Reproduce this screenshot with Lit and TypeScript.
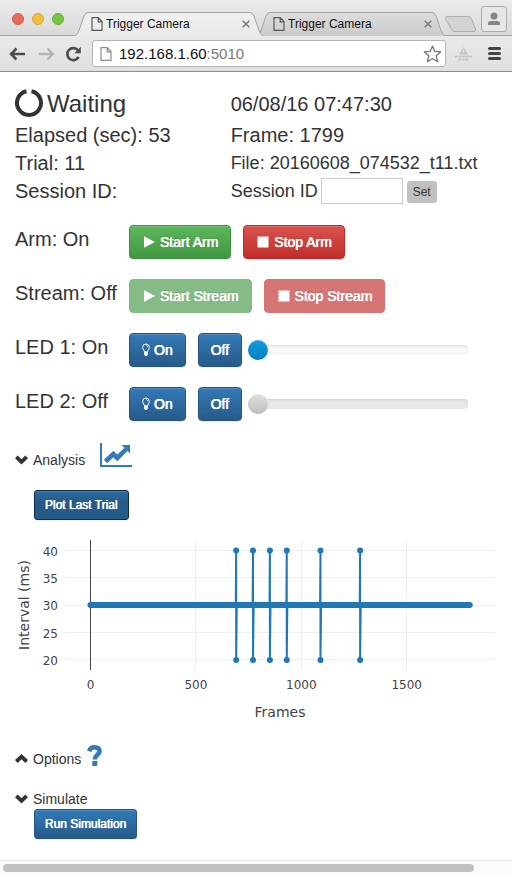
import { LitElement, html, svg, css } from "lit";
import { customElement, property, state } from "lit/decorators.js";
import { classMap } from "lit/directives/class-map.js";

const pageIcon = html`<svg class="page" width="12" height="14" viewBox="0 0 12 14" aria-hidden="true">
  <path d="M1 .7h6.3L11 4.6v8.7H1z M7.2 .8v4h3.8" fill="none" stroke="currentColor" stroke-width="1.2" />
</svg>`;

const playIcon = html`<svg width="14" height="14" viewBox="0 0 14 14" aria-hidden="true">
  <path d="M2 1.200 13 7 2 12.800z" fill="currentColor" />
</svg>`;

const stopIcon = html`<svg width="14" height="14" viewBox="0 0 14 14" aria-hidden="true">
  <rect x="1.5" y="1.5" width="11" height="11" fill="currentColor" />
</svg>`;

const bulbIcon = html`<svg width="8" height="14" viewBox="0 0 8 14" aria-hidden="true">
  <path d="M2.5 9.2C2.5 7.3.7 6.6.7 4.3A3.3 3.3 0 0 1 7.3 4.3C7.3 6.6 5.5 7.3 5.5 9.2z" fill="none" stroke="currentColor" />
  <path d="M4.3 2.5c1 .1 1.5.7 1.5 1.7" fill="none" stroke="currentColor" stroke-width=".8" />
  <path d="M2.2 8.600h3.6v3L4.9 13H3.1l-.9-1.400z" fill="currentColor" />
</svg>`;

const chevron = (up: boolean) => html`<svg class="chev" width="14" height="10" viewBox="0 0 14 10" aria-hidden="true">
  <path d=${up ? "M1.300 7.500 6.500 2.600 11.700 7.500" : "M1.300 1.900 6.500 6.800 11.700 1.900"} fill="none" stroke="currentColor" stroke-width="3.800" />
</svg>`;

@customElement("browser-tab")
export class BrowserTab extends LitElement {
  @property() label = "";
  @property({ type: Boolean }) active = false;

  static styles = css`
    :host { display: block; position: relative; flex: 0 1 190px; height: 24px; margin-left: -8px; }
    .shape { position: absolute; inset: 0; width: 100%; height: 100%; }
    .row { position: relative; display: flex; align-items: center; height: 24px; padding: 0 13px 0 17px; }
    .page { color: #5a5a5a; flex: none; }
    button { border: 0; padding: 0; background: none; font: 12px "Liberation Sans", Arial, sans-serif; color: #111; }
    .name { flex: 1; min-width: 0; margin-left: 3px; text-align: left; line-height: 16px; white-space: nowrap; overflow: hidden; }
    .close { flex: none; display: flex; color: #777; }
  `;

  render() {
    return html`
      <svg class="shape" viewBox="0 0 190 24" preserveAspectRatio="none" aria-hidden="true">
        <defs>
          <linearGradient id="g" x1="0" y1="0" x2="0" y2="1">
            <stop offset="0" stop-color=${this.active ? "#f1f1f1" : "#dcdcdc"} />
            <stop offset="1" stop-color=${this.active ? "#e9e9e9" : "#cbcbcb"} />
          </linearGradient>
        </defs>
        <path d="M0 24C3 23.500 4 21 5 18.500L10 4Q11.500.5 14 .5H176Q178.500.5 180 4L185 18.500C186 21 187 23.500 190 24" fill="url(#g)" stroke="#a3a3a3" />
      </svg>
      <div class="row">
        ${pageIcon}
        <button class="name">${this.label}</button>
        <button class="close" aria-label="Close tab">
          <svg width="10" height="10" viewBox="0 0 10 10"><path d="M1.700 1.700 8.300 8.300M8.300 1.700 1.700 8.300" stroke="currentColor" stroke-width="1.500" /></svg>
        </button>
      </div>`;
  }
}

@customElement("interval-plot")
export class IntervalPlot extends LitElement {
  private spikes = [691, 771, 851, 931, 1091, 1279];
  private last = 1799;

  static styles = css`
    :host { display: block; }
    .plot { display: block; width: 100%; height: auto; font-family: "DejaVu Sans", Verdana, sans-serif; fill: #444; }
    .tick { font-size: 12px; }
    .title { font-size: 14px; }
    .grid { stroke: #eee; fill: none; }
    .zero { stroke: #444; }
    .series { stroke: #1f77b4; stroke-width: 2; fill: none; }
    .band { stroke: #1f77b4; stroke-width: 6; stroke-linecap: round; }
    .dot { fill: #1f77b4; }
  `;

  private x(v: number) { return 90.5 + v * 0.2108; }
  private y(v: number) { return 20.5 + (40 - v) * 5.47; }

  render() {
    return html`
      <svg class="plot" viewBox="0 0 512 200" role="img" aria-label="Interval in milliseconds by frame">
        ${[40, 35, 30, 25, 20].map(v => svg`
          <path class="grid" d="M65 ${Math.floor(this.y(v)) + 0.5}H495" />
          <text class="tick" x="58" y=${Math.round(this.y(v)) + 5} text-anchor="end">${v}</text>`)}
        ${[500, 1000, 1500].map(v => svg`
          <path class="grid" d="M${Math.floor(this.x(v)) + 0.5} 10V140" />`)}
        <path class="zero" d="M90.500 10V140" />
        ${[0, 500, 1000, 1500].map(v => svg`
          <text class="tick" x=${this.x(v)} y="159" text-anchor="middle">${v}</text>`)}
        ${this.spikes.map(f => svg`
          <path class="series" d="M${this.x(f) - 0.4} ${this.y(30)}L${this.x(f)} ${this.y(40)}V${this.y(20)}L${this.x(f) + 0.6} ${this.y(30)}" />
          <circle class="dot" cx=${this.x(f)} cy=${this.y(40)} r="3" />
          <circle class="dot" cx=${this.x(f)} cy=${this.y(20)} r="3" />`)}
        <path class="band" d="M${this.x(0)} ${this.y(30) - 0.2}H${this.x(this.last)}" />
        <text class="title" x="280" y="187" text-anchor="middle">Frames</text>
        <text class="title" transform="translate(29 75) rotate(-90)" text-anchor="middle">Interval (ms)</text>
      </svg>`;
  }
}

@customElement("app-root")
export class AppRoot extends LitElement {
  @state() private leds = [
    { name: "LED 1", on: true, level: 0 },
    { name: "LED 2", on: false, level: 0 },
  ];

  static styles = css`
    :host { display: flex; flex-direction: column; min-height: 100vh; background: #fff; color: #333; font: 14px/20px "Liberation Sans", Arial, sans-serif; }
    * { box-sizing: border-box; }
    button, input { font-family: inherit; margin: 0; }
    svg { flex: none; }

    .strip { display: flex; align-items: flex-end; height: 36px; border-bottom: 1px solid #a3a3a3; background: linear-gradient(#ebebeb, #d9d9d9); }
    .lights { display: flex; gap: 8px; align-self: flex-start; flex: none; padding: 13px 10px 0 12px; }
    .light { width: 12px; height: 12px; border-radius: 50%; border: 1px solid #d5594d; background: #e46c5c; }
    .light.min { border-color: #dba33a; background: #efbf3d; }
    .light.max { border-color: #63ae3b; background: #76c442; }
    .tabs { display: flex; flex: 1; min-width: 0; padding-left: 8px; margin-bottom: -1px; }
    .front { z-index: 1; }
    .newtab { display: flex; flex: none; border: 0; padding: 0; background: none; margin: 3px 0 0 -3px; align-self: flex-start; }
    .person { display: flex; flex: none; align-items: center; justify-content: center; width: 26px; height: 26px; margin: 0 5px 3px 0; padding: 0; border: 1px solid #aaa; border-radius: 3px; background: #e6e6e6; color: #858585; }

    .bar { display: flex; align-items: center; height: 36px; padding: 0 9px; border-bottom: 1px solid #8e8e8e; background: linear-gradient(#e9e9e9, #e0e0e0); }
    .tool { display: flex; flex: none; border: 0; padding: 0; background: none; color: #4c4c4c; margin-right: 10px; }
    .tool.dim { color: #b5b5b5; }
    .omni { display: flex; flex: 1; min-width: 0; align-items: center; height: 27px; padding: 0 3px 0 7px; border: 1px solid #b3b3b3; border-radius: 3px; background: #fff; color: #8d8d8d; }
    .url { flex: 1; min-width: 0; margin-left: 7px; font-size: 15px; line-height: 20px; color: #777; text-decoration: none; }
    .host { color: #111; }
    .tool.star { margin: 0; color: #777; }
    .tool.ext { margin: 0 15px 0 8px; color: #c5c5c5; }
    .tool.menu { margin: 0 2px 0 0; color: #444; }

    .main { flex: 1; padding: 15px 15px 20px; }
    .info { display: grid; grid-template-columns: 17fr 21fr; grid-template-rows: 34px; grid-auto-rows: 28px; align-items: center; font-size: 20px; line-height: 28px; white-space: nowrap; }
    .state { display: flex; align-items: center; gap: 3px; font-size: 24px; }
    .mid { font-size: 18px; }
    .session { display: flex; align-items: center; gap: 3px; }
    .box { width: 82px; height: 26px; border: 1px solid #ccc; padding: 0 4px; background: #fff; }
    .set { height: 22px; margin: 2px 0 0 1px; padding: 0 6px; border: 0; border-radius: 3px; background: #c0c0c0; color: #333; font-size: 12px; }

    .ctl { display: grid; grid-template-columns: 114px 1fr; margin-top: 20px; }
    .name { font-size: 20px; line-height: 28px; white-space: nowrap; }
    .acts { display: flex; align-items: center; gap: 12px; }
    .btn { display: inline-flex; flex: none; align-items: center; gap: 4px; height: 34px; padding: 0 12px; border: 1px solid; border-radius: 4px; color: #fff; font-size: 14px; line-height: 20px; white-space: nowrap; text-shadow: 0 0 0 #fff, 0 0 1px #fff, 0 -1px 0 rgba(0, 0, 0, 0.2); box-shadow: inset 0 1px 0 rgba(255, 255, 255, 0.15), 0 1px 1px rgba(0, 0, 0, 0.075); }
    .btn.go { background: linear-gradient(#5cb85c, #419641); border-color: #3e8f3e; }
    .btn.halt { background: linear-gradient(#d9534f, #c12e2a); border-color: #b92c28; }
    .btn.blue { background: linear-gradient(#337ab7, #265a88); border-color: #245580; }
    .btn.go:disabled { background: #85bb85; border-color: #85bb85; box-shadow: none; }
    .btn.halt:disabled { background: #d67674; border-color: #d67674; box-shadow: none; }
    .btn.small { display: flex; height: 30px; margin-left: 19px; padding: 0 10px; border-radius: 3px; font-size: 12px; }
    .btn.pressed { background: linear-gradient(#2d6ca2, #265a88 40%); border-color: #122b40; }

    .slider { appearance: none; flex: 0 1 220px; min-width: 0; height: 20px; margin-left: -6px; background: none; }
    .slider::-webkit-slider-runnable-track { height: 10px; border-radius: 4px; background: linear-gradient(#f5f5f5, #f9f9f9); box-shadow: inset 0 1px 2px rgba(0, 0, 0, 0.1); }
    .slider::-webkit-slider-thumb { appearance: none; width: 20px; height: 20px; margin-top: -5px; border-radius: 50%; background: linear-gradient(#149bdf, #0480be); box-shadow: inset 0 1px 0 rgba(255, 255, 255, 0.2), 0 1px 2px rgba(0, 0, 0, 0.05); }
    .slider:disabled::-webkit-slider-runnable-track { background: linear-gradient(#e5e5e5, #e9e9e9); }
    .slider:disabled::-webkit-slider-thumb { background: linear-gradient(#dfdfdf, #bebebe); }

    .head { display: flex; align-items: flex-end; }
    .fold { display: flex; align-items: center; gap: 4px; border: 0; padding: 0; background: none; color: #333; font-size: 14px; line-height: 20px; }
    .link { display: flex; margin: 0 0 3px 15px; color: #337ab7; }
    .link.help { margin-left: 6px; }
    .analysis { margin-top: 22px; }
    .plotbtn { margin-top: 20px; }
    .chart { margin: 10px -15px 15px; }
    .simulate { margin-top: 20px; }

    .scroll { height: 15px; padding: 3px; border-top: 1px solid #e5e5e5; background: #fafafa; }
    .thumb { width: 93%; height: 8px; border-radius: 4px; background: #c1c1c1; }
  `;

  private setLed(i: number, on: boolean) {
    this.leds = this.leds.map((l, n) => (n === i ? { ...l, on } : l));
  }

  private chrome() {
    return html`
      <div class="strip">
        <div class="lights">
          <span class="light"></span><span class="light min"></span><span class="light max"></span>
        </div>
        <div class="tabs">
          <browser-tab class="front" label="Trigger Camera" active></browser-tab>
          <browser-tab label="Trigger Camera"></browser-tab>
          <button class="newtab" aria-label="New tab">
            <svg width="34" height="18" viewBox="0 0 34 18"><path d="M4 1.500H25.500Q27.500 1.500 28.300 3.500L32.500 14Q33 16.500 31 16.500H12Q9.500 16.500 8.500 14.500L2.500 3.500Q2 1.500 4 1.500z" fill="#d2d2d2" stroke="#adadad" /></svg>
          </button>
        </div>
        <button class="person" aria-label="Profile">
          <svg width="14" height="14" viewBox="0 0 14 14"><circle cx="7" cy="4" r="3.500" fill="currentColor" /><path d="M1 13V11.500Q1 9 4 9h6q3 0 3 2.500V13z" fill="currentColor" /></svg>
        </button>
      </div>
      <div class="bar">
        <button class="tool" aria-label="Back"><svg width="18" height="14" viewBox="0 0 18 14"><path d="M7.500 1.500 2 7l5.500 5.500M2.500 7H16" fill="none" stroke="currentColor" stroke-width="2.500" /></svg></button>
        <button class="tool dim" aria-label="Forward"><svg width="18" height="14" viewBox="0 0 18 14"><path d="M10.500 1.500 16 7l-5.500 5.500M15.500 7H2" fill="none" stroke="currentColor" stroke-width="2.300" /></svg></button>
        <button class="tool" aria-label="Reload"><svg width="17" height="16" viewBox="0 0 17 16"><path d="M13 4.300A6 6 0 1 0 13.600 11" fill="none" stroke="currentColor" stroke-width="2.600" /><path d="M15.800.8V7.200H9.400z" fill="currentColor" /></svg></button>
        <div class="omni">
          ${pageIcon}
          <a class="url" href="#"><span class="host">192.168.1.60</span>:5010</a>
          <button class="tool star" aria-label="Bookmark"><svg width="19" height="18" viewBox="0 0 18 18"><path d="M9 1 11.300 6.400 17.200 6.900 12.700 10.800 14.100 16.700 9 13.500 3.900 16.700 5.300 10.800.8 6.900 6.700 6.400z" fill="none" stroke="currentColor" stroke-width="1.300" stroke-linejoin="round" /></svg></button>
        </div>
        <button class="tool ext" aria-label="Extension"><svg width="19" height="16" viewBox="0 0 19 16"><path d="M9.500 1 14 8.500H5z" fill="currentColor" /><path d="M9.500 3.500v3" stroke="#eee" stroke-width="1.300" /><path d="M1 10.500h17M4 13.500h11" stroke="currentColor" stroke-width="1.800" stroke-dasharray="3 .6" /></svg></button>
        <button class="tool menu" aria-label="Menu"><svg width="13" height="13" viewBox="0 0 13 13"><path d="M1.500 1.500h10M1.500 6.500h10M1.500 11.500h10" stroke="currentColor" stroke-width="3" stroke-linecap="round" /></svg></button>
      </div>`;
  }

  render() {
    return html`
      ${this.chrome()}
      <main class="main">
        <div class="info">
          <div class="state">
            <svg width="29" height="30" viewBox="0 0 29 30" aria-hidden="true"><path d="M16.500 2.200A12 12 0 1 1 11.500 2.200" fill="none" stroke="#333" stroke-width="4" /></svg>
            <span>Waiting</span>
          </div>
          <div>06/08/16 07:47:30</div>
          <div>Elapsed (sec): 53</div>
          <div>Frame: 1799</div>
          <div>Trial: 11</div>
          <div class="mid">File: 20160608_074532_t11.txt</div>
          <div>Session ID:</div>
          <div class="session mid">
            <label for="sid">Session ID</label>
            <input class="box" id="sid" type="text" />
            <button class="set">Set</button>
          </div>
        </div>

        <div class="ctl">
          <div class="name">Arm: On</div>
          <div class="acts">
            <button class="btn go">${playIcon}Start Arm</button>
            <button class="btn halt">${stopIcon}Stop Arm</button>
          </div>
        </div>
        <div class="ctl">
          <div class="name">Stream: Off</div>
          <div class="acts">
            <button class="btn go" disabled>${playIcon}Start Stream</button>
            <button class="btn halt" disabled>${stopIcon}Stop Stream</button>
          </div>
        </div>
        ${this.leds.map((led, i) => html`
          <div class="ctl">
            <div class="name">${led.name}: ${led.on ? "On" : "Off"}</div>
            <div class="acts">
              <button class="btn blue" @click=${() => this.setLed(i, true)}>${bulbIcon}On</button>
              <button class="btn blue" @click=${() => this.setLed(i, false)}>Off</button>
              <input class="slider" type="range" aria-label="${led.name} level" min="0" max="255" .value=${String(led.level)} ?disabled=${!led.on} />
            </div>
          </div>`)}

        <div class="head analysis">
          <button class="fold">${chevron(false)}Analysis</button>
          <a class="link" href="#" aria-label="Plot page">
            <svg width="32" height="24" viewBox="0 0 32 24"><path d="M1 0V23H32" fill="none" stroke="currentColor" stroke-width="2" /><path d="M5.500 18.500 13.300 11l4 4L26 6.300" fill="none" stroke="currentColor" stroke-width="4.600" /><path d="M21.500 2H30v8.500z" fill="currentColor" /></svg>
          </a>
        </div>
        <button class=${classMap({ btn: true, blue: true, small: true, pressed: true, plotbtn: true })}>Plot Last Trial</button>
        <interval-plot class="chart"></interval-plot>

        <div class="head">
          <button class="fold">${chevron(true)}Options</button>
          <a class="link help" href="#" aria-label="Help">
            <svg width="15" height="21" viewBox="0 0 15 21"><path d="M2.200 6.200C3 3.700 4.800 2.300 7.500 2.300c3.200 0 5 1.500 5 3.900 0 3.600-4.700 3.600-4.700 8.300" fill="none" stroke="currentColor" stroke-width="4.600" /><rect x="5.300" y="16" width="5" height="5" fill="currentColor" /></svg>
          </a>
        </div>

        <div class="head simulate">
          <button class="fold">${chevron(false)}Simulate</button>
        </div>
        <button class="btn blue small">Run Simulation</button>
      </main>
      <div class="scroll"><div class="thumb"></div></div>`;
  }
}
